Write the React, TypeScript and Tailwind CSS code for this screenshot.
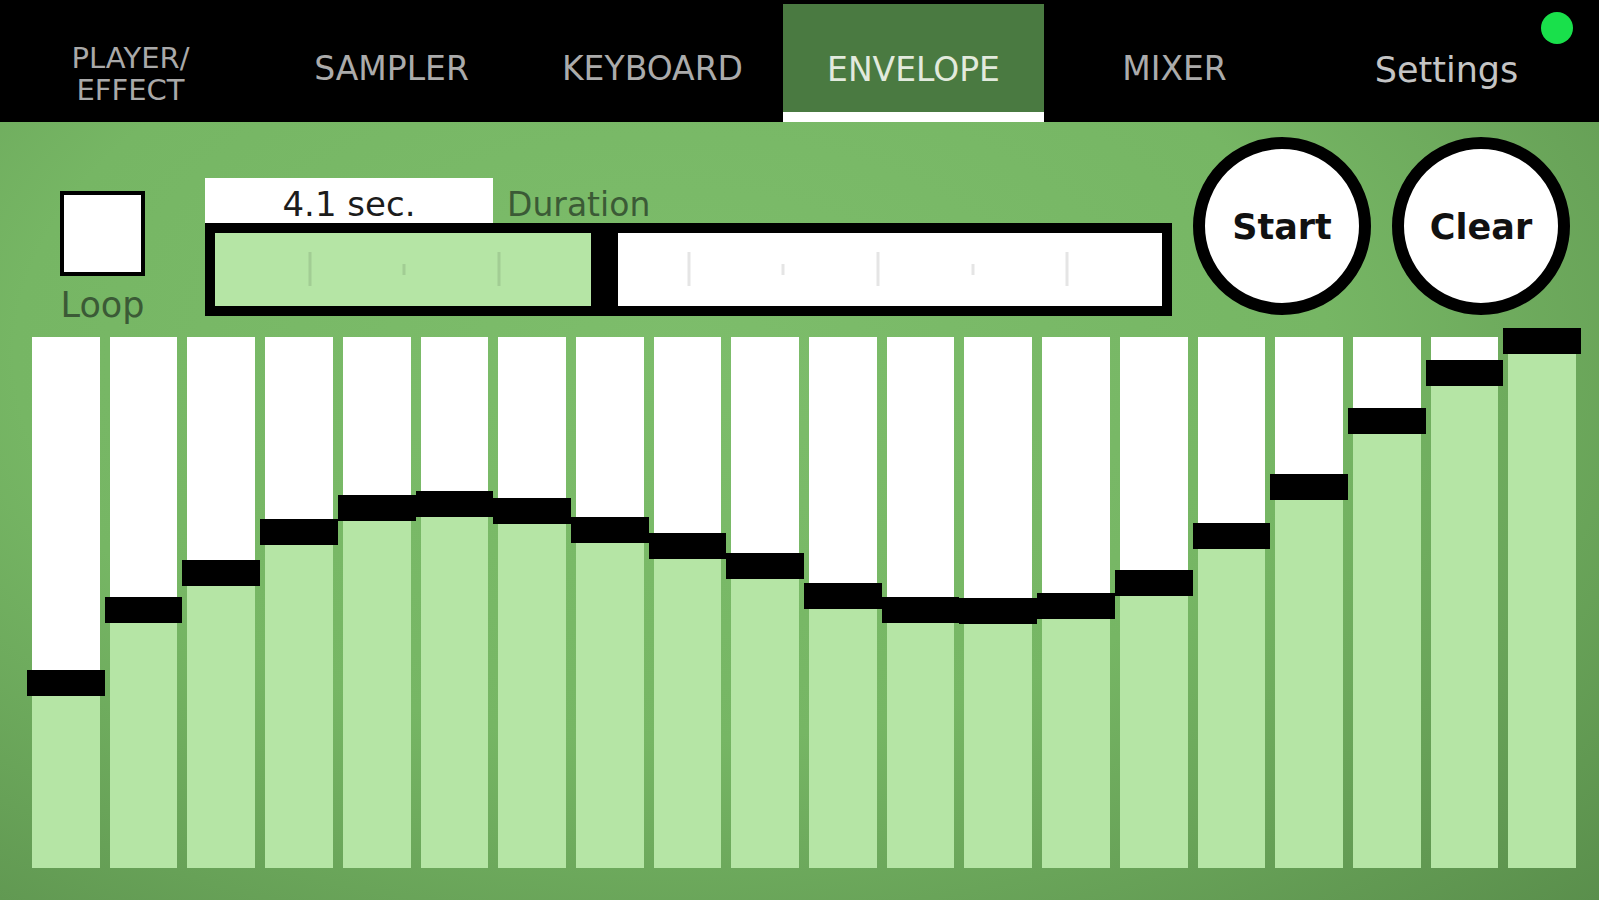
import React from "react";

const tabs = [
  { id: "player", label: "PLAYER/\nEFFECT" },
  { id: "sampler", label: "SAMPLER" },
  { id: "keyboard", label: "KEYBOARD" },
  { id: "envelope", label: "ENVELOPE" },
  { id: "mixer", label: "MIXER" },
];

// centre of each black handle, in page pixels
const handles = [
  683, 610, 573, 532, 508, 504, 511, 530, 546, 566, 596, 610, 611, 606, 583,
  536, 487, 421, 373, 341,
];

const BAR_TOP = 337;
const HANDLE = 26;

function Tab({ id, label }: { id: string; label: string }) {
  const active = id === "envelope";
  if (active) {
    return (
      <div className="mt-[4px] flex h-[118px] w-[261px] items-center justify-center border-b-[10px] border-white bg-[#4a7a41] pt-[24px]">
        <span className="text-[33px] text-[#e2eadd]">{label}</span>
      </div>
    );
  }
  if (label.includes("\n")) {
    return (
      <div className="flex h-full w-[261px] flex-col items-center justify-center pt-[26px] text-[29px] leading-[32px] text-[#a9a9a9]">
        {label.split("\n").map((l) => (
          <span key={l}>{l}</span>
        ))}
      </div>
    );
  }
  return (
    <div className="flex h-full w-[261px] items-center justify-center pt-[16px]">
      <span className="text-[33px] text-[#ababab]">{label}</span>
    </div>
  );
}

function DurationSlider() {
  const ticks = [1, 2, 3, 4, 5, 6, 7, 8, 9];
  return (
    <div className="flex h-[93px] bg-black p-[10px]">
      <div className="relative flex flex-1">
        <div className="w-[376px] bg-[#b5e5a5]" />
        <div className="w-[27px] bg-black" />
        <div className="flex-1 bg-white" />
        {ticks.map((t) => (
          <div
            key={t}
            className={
              t % 2 === 1
                ? "absolute top-[19px] h-[34px] w-[3px] -translate-x-1/2 bg-black/10"
                : "absolute top-[31px] h-[11px] w-[3px] -translate-x-1/2 bg-black/10"
            }
            style={{ left: `${t * 10}%` }}
          />
        ))}
      </div>
    </div>
  );
}

function RoundButton({ label }: { label: string }) {
  return (
    <button className="ml-[21px] mt-[15px] flex h-[178px] w-[178px] shrink-0 items-center justify-center rounded-full border-[12px] border-black bg-white pt-[3px] text-[35px] font-bold text-[#111]">
      {label}
    </button>
  );
}

function EnvelopeBar({ center }: { center: number }) {
  const top = center - HANDLE / 2 - BAR_TOP;
  return (
    <div className="flex min-w-0 flex-1 flex-col">
      <div className="bg-white" style={{ height: Math.max(top, 0) }} />
      <div
        className="-mx-[5px] h-[26px] shrink-0 bg-black"
        style={{ marginTop: Math.min(top, 0) }}
      />
      <div className="flex-1 bg-[#b5e5a5]" />
    </div>
  );
}

export default function App() {
  return (
    <div className="flex h-[900px] w-[1599px] flex-col overflow-hidden font-['DejaVu_Sans',sans-serif]">
      <header className="relative flex h-[122px] shrink-0 bg-black">
        {tabs.map((t) => (
          <Tab key={t.id} id={t.id} label={t.label} />
        ))}
        <div className="flex h-full w-[261px] items-center justify-center pl-[22px] pt-[18px]">
          <span className="text-[35px] text-[#c4c4c4]">Settings</span>
        </div>
        <div className="absolute right-[26px] top-[12px] h-[32px] w-[32px] rounded-full bg-[#19e04b]" />
      </header>

      <main className="flex flex-1 flex-col bg-[radial-gradient(ellipse_at_42%_30%,#7dbd6b_0%,#76b664_50%,#5a8f4c_100%)]">
        <div className="flex h-[215px] shrink-0 items-start">
          <div className="ml-[60px] mt-[69px] flex w-[85px] flex-col items-center">
            <div className="h-[85px] w-[85px] border-[4px] border-black bg-white" />
            <span className="mt-[11px] text-[35px] leading-[36px] text-[#3b5a36]">
              Loop
            </span>
          </div>

          <div className="ml-[60px] mt-[56px] flex w-[967px] flex-col">
            <div className="flex h-[45px] items-start">
              <div className="flex h-[45px] w-[288px] justify-center bg-white pt-[9px] text-[34px] leading-none text-[#1c1c1c]">
                4.1 sec.
              </div>
              <span className="ml-[14px] pt-[10px] text-[33px] leading-none text-[#3b5a36]">
                Duration
              </span>
            </div>
            <DurationSlider />
          </div>

          <RoundButton label="Start" />
          <RoundButton label="Clear" />
        </div>

        <div className="flex h-[531px] shrink-0 gap-[10px] pl-[32px] pr-[23px]">
          {handles.map((c, i) => (
            <EnvelopeBar key={i} center={c} />
          ))}
        </div>
      </main>
    </div>
  );
}
